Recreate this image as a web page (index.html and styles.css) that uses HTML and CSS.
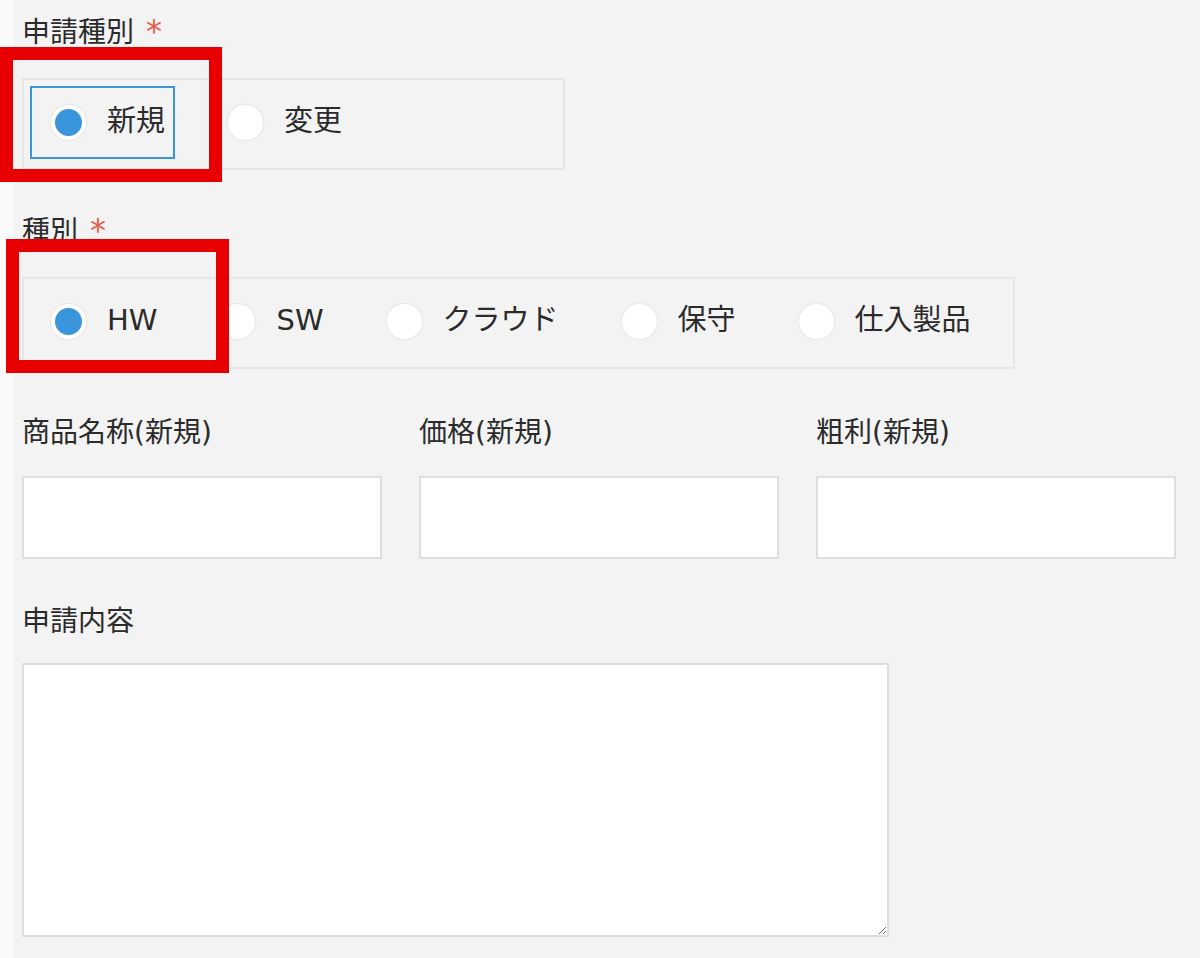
FILE: index.html
```html
<!DOCTYPE html>
<html lang="ja">
<head>
<meta charset="utf-8">
<title>申請フォーム</title>
<link rel="stylesheet" href="styles.css">
</head>
<body>
<div class="form">
  <div class="field field-radio first">
    <div class="label">申請種別<span class="req">*</span></div>
    <div class="radio-group g1">
      <label class="item focused"><span class="circle checked"></span><span class="text">新規</span></label>
      <label class="item"><span class="circle"></span><span class="text">変更</span></label>
    </div>
    <div class="mark mark1"></div>
  </div>

  <div class="field field-radio second">
    <div class="label">種別<span class="req">*</span></div>
    <div class="radio-group g2">
      <label class="item"><span class="circle checked"></span><span class="text">HW</span></label>
      <label class="item"><span class="circle"></span><span class="text">SW</span></label>
      <label class="item"><span class="circle"></span><span class="text">クラウド</span></label>
      <label class="item"><span class="circle"></span><span class="text">保守</span></label>
      <label class="item"><span class="circle"></span><span class="text">仕入製品</span></label>
    </div>
    <div class="mark mark2"></div>
  </div>

  <div class="row">
    <div class="field">
      <div class="label label-input">商品名称(新規)</div>
      <input class="input" type="text">
    </div>
    <div class="field">
      <div class="label label-input">価格(新規)</div>
      <input class="input" type="text">
    </div>
    <div class="field">
      <div class="label label-input">粗利(新規)</div>
      <input class="input" type="text">
    </div>
  </div>

  <div class="field area-field">
    <div class="label label-area">申請内容</div>
    <textarea class="area"></textarea>
  </div>
</div>
</body>
</html>
```

FILE: styles.css
```css
* { box-sizing: border-box; }

html, body {
  margin: 0;
  padding: 0;
}

body {
  width: 1200px;
  height: 958px;
  overflow: hidden;
  background: linear-gradient(to right, #fafafa 0, #fafafa 14px, #f3f3f3 14px);
  font-family: "DejaVu Sans", "Noto Sans CJK JP", sans-serif;
  color: #2b2b2b;
}

.form {
  padding: 13px 0 0 22px;
}

.field {
  position: relative;
}

.label {
  font-size: 28px;
  line-height: 36px;
  height: 40px;
  white-space: nowrap;
  color: #2b2b2b;
}

.req {
  color: #e8594a;
  font-family: "DejaVu Sans", sans-serif;
  font-size: 32px;
  margin-left: 12px;
}

.field-radio .label {
  margin-bottom: 25px;
}

.second {
  margin-top: 42px;
}

.radio-group {
  display: flex;
  align-items: center;
  border: 2px solid #e6e6e6;
  padding: 6px 6px 9px 6px;
  height: 92px;
}

.g1 { width: 543px; }
.g2 { width: 993px; }

.item {
  display: flex;
  flex: none;
  align-items: center;
  white-space: nowrap;
  height: 73px;
  border: 2px solid transparent;
  padding: 0 8px 0 18px;
  margin-right: 32px;
}

.item:last-child {
  margin-right: 0;
}

.item.focused {
  border-color: #3b95d6;
}

.circle {
  width: 37px;
  height: 37px;
  border-radius: 50%;
  background: #ffffff;
  border: 1px solid #e9e9e9;
  box-shadow: 0 0 2px rgba(0, 0, 0, 0.05);
  display: flex;
  align-items: center;
  justify-content: center;
  flex: none;
}

.circle.checked::after {
  content: "";
  width: 27px;
  height: 27px;
  border-radius: 50%;
  background: #3a96dc;
}

.text {
  margin-left: 20px;
  font-size: 29px;
  line-height: 36px;
  padding-bottom: 4px;
  color: #2b2b2b;
}

.mark {
  position: absolute;
  border: 13px solid #e80000;
  pointer-events: none;
}

.mark1 {
  left: -22px;
  top: 34px;
  width: 222px;
  height: 135px;
}

.mark2 {
  left: -16px;
  top: 27px;
  width: 223px;
  height: 134px;
}

.row {
  display: grid;
  grid-template-columns: 360px 360px 360px;
  column-gap: 37px;
  margin-top: 46px;
}

.label-input {
  margin-bottom: 21px;
}

.input {
  display: block;
  width: 360px;
  height: 83px;
  margin: 0;
  border: 2px solid #dedede;
  background: #ffffff;
  outline: none;
  font-family: inherit;
}

.area-field {
  margin-top: 45px;
}

.label-area {
  margin-bottom: 19px;
}

.area {
  display: block;
  width: 867px;
  height: 274px;
  margin: 0;
  border: 2px solid #dedede;
  background: #ffffff;
  resize: both;
  outline: none;
  font-family: inherit;
}
```
